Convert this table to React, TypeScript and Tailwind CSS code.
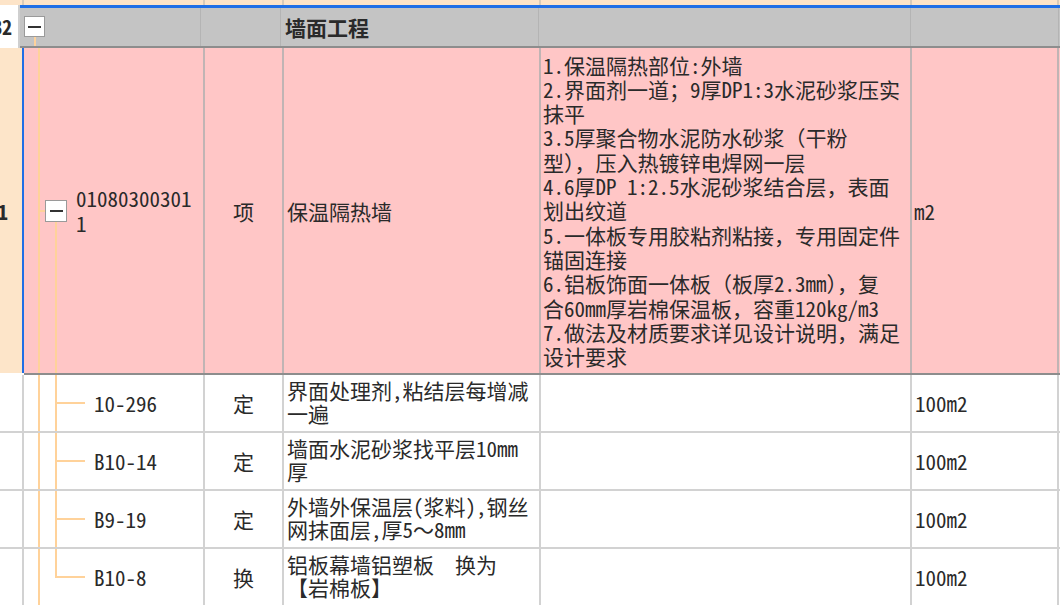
import React from 'react';

// column widths incl. their 2px right border
const W = ['w-[24px]', 'w-[181px]', 'w-[79px]', 'w-[257px]', 'w-[371px]', 'w-[147px]'];

const desc = [
  '1.保温隔热部位:外墙',
  '2.界面剂一道；9厚DP1:3水泥砂浆压实',
  '抹平',
  '3.5厚聚合物水泥防水砂浆（干粉',
  '型），压入热镀锌电焊网一层',
  '4.6厚DP 1:2.5水泥砂浆结合层，表面',
  '划出纹道',
  '5.一体板专用胶粘剂粘接，专用固定件',
  '锚固连接',
  '6.铝板饰面一体板（板厚2.3mm），复',
  '合60mm厚岩棉保温板，容重120kg/m3',
  '7.做法及材质要求详见设计说明，满足',
  '设计要求',
];

const items = [
  { code: '10-296', type: '定', name: ['界面处理剂,粘结层每增减', '一遍'], unit: '100m2' },
  { code: 'B10-14', type: '定', name: ['墙面水泥砂浆找平层10mm', '厚'], unit: '100m2' },
  { code: 'B9-19', type: '定', name: ['外墙外保温层(浆料),钢丝', '网抹面层,厚5～8mm'], unit: '100m2' },
  { code: 'B10-8', type: '换', name: ['铝板幕墙铝塑板　换为', '【岩棉板】'], unit: '100m2' },
];

function MinusBox({ className }: { className: string }) {
  return (
    <div className={`absolute flex items-center justify-center bg-white border border-[#9a9a9a] ${className}`}>
      <div className="h-[2px] w-[13px] bg-[#333]" />
    </div>
  );
}

export default function App() {
  return (
    <div className="w-[1060px] h-[605px] overflow-hidden bg-white text-[#2a2a2a] text-[21px] leading-[24px] font-['Noto_Sans_Mono_CJK_SC','Noto_Sans_CJK_SC',sans-serif]">
      {/* previous row remnant */}
      <div className="flex h-[5px] bg-[#fde4c8]">
        {W.map((w, i) => (
          <div key={i} className={`${w} border-r-2 border-[#d9cbb9]`} />
        ))}
      </div>

      {/* B2 section row */}
      <div className="flex h-[43px]">
        <div className={`${W[0]} flex items-center justify-end overflow-hidden pr-[6px] bg-white border-r-2 border-[#cfcfcf] font-bold text-[20px]`}>
          B2
        </div>
        <div className="flex flex-1 bg-[#c4c4c4] border-t-[3px] border-t-[#1f6fe6] border-b-2 border-b-[#8d8d8d]">
          <div className={`${W[1]} relative border-r border-[#b4b4b4] mr-px`}>
            <MinusBox className="left-[4px] top-[8px] w-[21px] h-[21px]" />
            <div className="absolute left-[14px] top-[29px] bottom-0 w-[2px] bg-[#ffd29a]" />
          </div>
          <div className={`${W[2]} border-r border-[#b4b4b4] mr-px`} />
          <div className={`${W[3]} flex items-center pl-[3px] font-bold border-r border-[#b4b4b4] mr-px`}>墙面工程</div>
          <div className={`${W[4]} border-r border-[#b4b4b4] mr-px`} />
          <div className={`${W[5]} border-r border-[#b4b4b4] mr-px`} />
        </div>
      </div>

      {/* selected item row */}
      <div className="flex h-[327px]">
        <div className={`${W[0]} h-[325px] flex items-center justify-end overflow-hidden pr-[14px] bg-[#fde5c9] border-r-2 border-[#1f6fe6] font-bold`}>
          1
        </div>
        <div className="flex flex-1 bg-[#ffc6c6] border-b-2 border-[#8d8d8d]">
          <div className={`${W[1]} relative flex items-center pl-[52px] leading-[25px] border-r-2 border-[#c0b4b4]`}>
            <div className="absolute left-[14px] top-0 bottom-0 w-[2px] bg-[#ffd29a]" />
            <div className="absolute left-[14px] top-[162px] h-[2px] w-[8px] bg-[#ffd29a]" />
            <div className="absolute left-[31px] top-[174px] bottom-0 w-[2px] bg-[#ffd29a]" />
            <MinusBox className="left-[21px] top-[152px] w-[22px] h-[22px]" />
            <div>
              <div>01080300301</div>
              <div>1</div>
            </div>
          </div>
          <div className={`${W[2]} flex items-center justify-center border-r-2 border-[#c0b4b4]`}>项</div>
          <div className={`${W[3]} flex items-center pl-[3px] border-r-2 border-[#c0b4b4]`}>保温隔热墙</div>
          <div className={`${W[4]} flex flex-col justify-center pl-[2px] leading-[24.3px] border-r-2 border-[#c0b4b4]`}>
            {desc.map((line, i) => (
              <div key={i} className="whitespace-nowrap">{line}</div>
            ))}
          </div>
          <div className={`${W[5]} flex items-center pl-[2px] border-r-2 border-[#c0b4b4]`}>m2</div>
        </div>
      </div>

      {/* sub items */}
      {items.map((it, idx) => (
        <div key={it.code} className="flex h-[58px] border-b-2 border-[#d2d2d2]">
          <div className={`${W[0]} border-r-2 border-[#d2d2d2]`} />
          <div className={`${W[1]} relative flex items-center pl-[70px] border-r-2 border-[#d2d2d2]`}>
            <div className="absolute left-[14px] top-0 bottom-0 w-[2px] bg-[#ffd29a]" />
            <div className={`absolute left-[31px] top-0 w-[2px] bg-[#ffd29a] ${idx === items.length - 1 ? 'h-[29px]' : 'bottom-0'}`} />
            <div className="absolute left-[31px] top-[27px] h-[2px] w-[30px] bg-[#ffd29a]" />
            {it.code}
          </div>
          <div className={`${W[2]} flex items-center justify-center border-r-2 border-[#d2d2d2]`}>{it.type}</div>
          <div className={`${W[3]} flex flex-col justify-center pl-[3px] pb-[3px] leading-[23px] border-r-2 border-[#d2d2d2]`}>
            {it.name.map((n, i) => (
              <div key={i} className="whitespace-nowrap">{n}</div>
            ))}
          </div>
          <div className={`${W[4]} border-r-2 border-[#d2d2d2]`} />
          <div className={`${W[5]} flex items-center pl-[3px] border-r-2 border-[#d2d2d2]`}>{it.unit}</div>
        </div>
      ))}
    </div>
  );
}
